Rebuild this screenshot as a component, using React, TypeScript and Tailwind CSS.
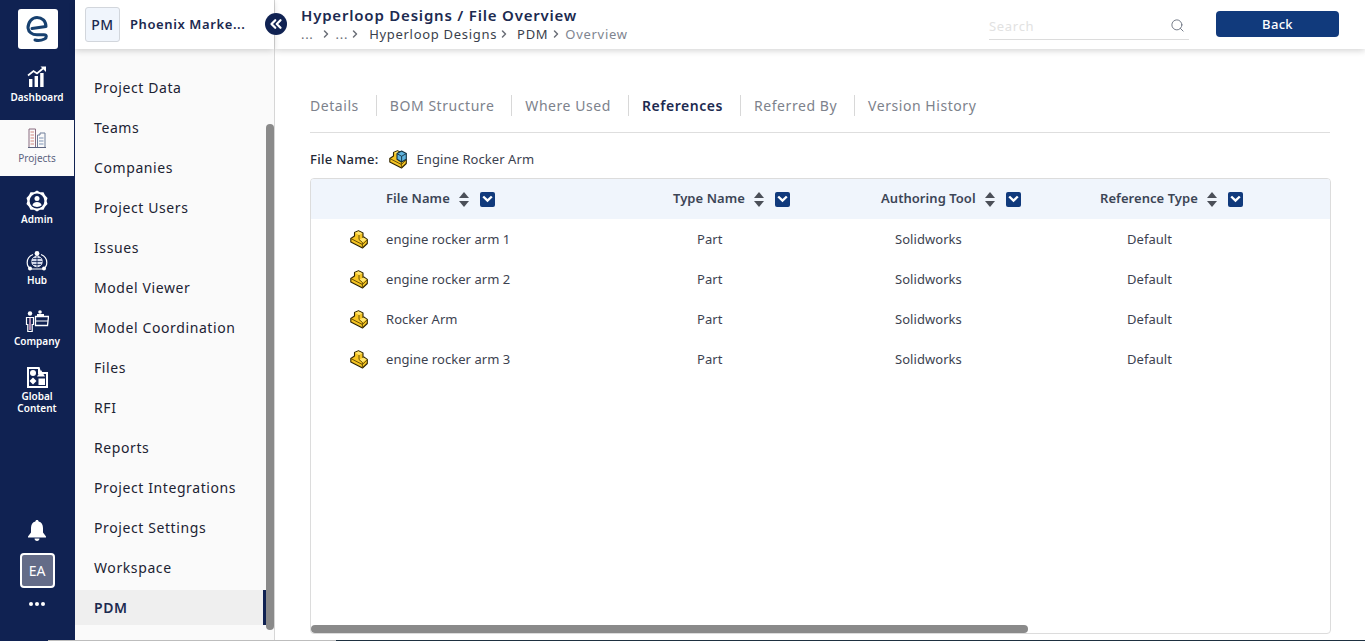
import { ChevronRight, ChevronsLeft, Search } from 'lucide-react';
import type { ReactNode } from 'react';

const projectLinks = [
  'Project Data',
  'Teams',
  'Companies',
  'Project Users',
  'Issues',
  'Model Viewer',
  'Model Coordination',
  'Files',
  'RFI',
  'Reports',
  'Project Integrations',
  'Project Settings',
  'Workspace',
];

const tabs = ['Details', 'BOM Structure', 'Where Used', 'References', 'Referred By', 'Version History'];

const rows = ['engine rocker arm 1', 'engine rocker arm 2', 'Rocker Arm', 'engine rocker arm 3'];

function PartIcon({ assembly = false }: { assembly?: boolean }) {
  return (
    <svg width="18" height="19" viewBox="0 0 18 19" className="shrink-0">
      <path
        d="M.8 8.5 4.5 6V2.5L8.5 .7 13 3V7.5L13.8 7 17.3 9.5V13.5L12.5 18 .8 12Z"
        fill="#f5c423"
        stroke="#2f2502"
        strokeWidth="1.1"
        strokeLinejoin="round"
      />
      <path d="M5 2.8 8.5 1.2 12.5 3.2 9 5Z" fill="#ffe56e" />
      <path d="M9.4 9.5 13.6 7.4 16.8 9.6 12.4 12.3Z" fill="#ffe56e" />
      <path d="M.8 8.5 12.4 14.5V18M12.4 14.5 17.3 9.6M9 5V9.5L12.4 12.4V14.5" fill="none" stroke="#5e4703" strokeWidth=".9" />
      {assembly && (
        <g strokeLinejoin="round">
          <path d="M8 3.6 12.6 1 17.3 3.6V9.2L12.6 12 8 9.2Z" fill="#5fb2dc" stroke="#12303f" strokeWidth="1.1" />
          <path d="M8 3.6 12.6 6.3 17.3 3.6M12.6 6.3V12" fill="none" stroke="#12303f" strokeWidth=".9" />
        </g>
      )}
    </svg>
  );
}

function SortControls() {
  return (
    <div className="flex items-center gap-[11px]">
      <svg width="10" height="15" viewBox="0 0 10 15" fill="#4b4f58">
        <path d="M5 0 10 6H0Z" />
        <path d="M5 15 0 9H10Z" />
      </svg>
      <span className="flex h-[15px] w-[15px] items-center justify-center rounded-[2px] bg-[#113a7c]">
        <svg width="11" height="8" viewBox="0 0 11 8" fill="none" stroke="#fff" strokeWidth="2.4">
          <path d="M1.2 1.5 5.5 5.6 9.8 1.5" />
        </svg>
      </span>
    </div>
  );
}

function RailItem({ label, icon, active }: { label: ReactNode; icon: ReactNode; active?: boolean }) {
  return (
    <div
      className={`flex w-[74px] flex-col items-center text-center text-[10px] leading-[12px] ${
        active ? 'h-[56px] gap-[4px] bg-[#fafafa] pt-[8px] text-[#5c6480]' : 'font-semibold text-white'
      }`}
    >
      {icon}
      <span>{label}</span>
    </div>
  );
}

function Rail() {
  return (
    <aside className="flex w-[75px] shrink-0 flex-col items-start bg-[#102252] pt-[9px]">
      <div className="ml-[18px] flex h-10 w-10 items-center justify-center rounded-[3px] bg-white">
        <svg width="26" height="28" viewBox="0 0 26 28" fill="none" stroke="#17406f" strokeWidth="3" strokeLinecap="round" strokeLinejoin="round">
          <path d="M3 13C3 7 7 2.5 12 2.5 17 2.5 21 6 21 11.5L7 13.5M3 13C3.5 17 7 19.8 12 19.8H19C22 19.8 22 22.8 19.5 24 17 25.2 13 25.8 10 25" />
        </svg>
      </div>

      <div className="mt-[17px] flex flex-col">
        <RailItem
          label="Dashboard"
          icon={
            <svg width="20" height="22" viewBox="0 0 20 22" fill="#fff" className="mb-[3px]">
              <rect x="2" y="13" width="3.4" height="8" />
              <rect x="7.6" y="10" width="3.4" height="11" />
              <rect x="13.2" y="7" width="3.4" height="14" />
              <path d="M1 9.5 6.5 5 10 7.5 16 2.5" fill="none" stroke="#fff" strokeWidth="1.7" />
              <path d="M13.5 0.5H19V6Z" />
            </svg>
          }
        />
        <div className="mt-[17px]">
          <RailItem
            active
            label="Projects"
            icon={
              <svg width="18" height="20" viewBox="0 0 18 20" fill="none" strokeWidth="1">
                <path d="M1 19.5V1H7.5V19.5" stroke="#8a6d80" />
                <path d="M9.5 19.5V7H12V5H17V19.5" stroke="#6f7f9a" />
                <path d="M2.5 4H6M2.5 7H6M2.5 10H6M2.5 13H6M2.5 16H6" stroke="#d28a80" />
                <path d="M11 10H15.5M11 13H15.5M11 16H15.5" stroke="#7d93b5" />
                <path d="M0 19.5H18" stroke="#5c6480" />
              </svg>
            }
          />
        </div>
        <div className="mt-[14px]">
          <RailItem
            label="Admin"
            icon={
              <svg width="22" height="22" viewBox="0 0 22 22" className="mb-[1px]">
                <path
                  d="M11 0.5 14 2.2 17.5 2.2 19 5.3 21.5 8 20.6 11 21.5 14 19 16.7 17.5 19.8 14 19.8 11 21.5 8 19.8 4.5 19.8 3 16.7 0.5 14 1.4 11 0.5 8 3 5.3 4.5 2.2 8 2.2Z"
                  fill="#fff"
                />
                <circle cx="11" cy="11" r="7.4" fill="#102252" />
                <circle cx="11" cy="8.6" r="2.5" fill="#fff" />
                <path d="M6.3 15.3C7 12.8 9 12 11 12S15 12.8 15.7 15.3C13 17.6 9 17.6 6.3 15.3Z" fill="#fff" />
              </svg>
            }
          />
        </div>
        <div className="mt-[25px]">
          <RailItem
            label="Hub"
            icon={
              <svg width="22" height="22" viewBox="0 0 22 22" fill="none" stroke="#fff" className="mb-[2px]">
                <path d="M7 4.5C3.5 6 1.2 9 1.2 12.5 1.2 15.5 3 18 5 19H17C19 18 20.8 15.5 20.8 12.5 20.8 9 18.5 6 15 4.5" strokeWidth="1.2" />
                <circle cx="11" cy="3.5" r="2.4" fill="#fff" stroke="none" />
                <circle cx="11" cy="11.5" r="5.3" fill="#cfd6ea" stroke="#fff" strokeWidth="0.8" />
                <path d="M5.7 11.5H16.3M11 6.2V16.8M7 8.5H15M7 14.5H15" stroke="#102252" strokeWidth="0.8" />
                <circle cx="4" cy="18.5" r="2" fill="#fff" stroke="none" />
                <circle cx="18" cy="18.5" r="2" fill="#fff" stroke="none" />
              </svg>
            }
          />
        </div>
        <div className="mt-[24px]">
          <RailItem
            label="Company"
            icon={
              <svg width="24" height="22" viewBox="0 0 24 22" fill="none" className="mb-[3px]">
                <circle cx="5" cy="3.5" r="2.2" fill="#fff" />
                <path d="M1.5 7.5H8.5V14.5H7.2V21.5H2.8V14.5H1.5Z" stroke="#fff" strokeWidth="1.2" />
                <path d="M5 8V20" stroke="#d9a6c9" strokeWidth="1.6" />
                <circle cx="15" cy="2" r="1.8" fill="#fff" />
                <path d="M10.5 6.5H23.5L22.5 15.5H10.5Z" stroke="#fff" strokeWidth="1.3" />
                <path d="M12 5H19" stroke="#fff" strokeWidth="2" />
                <path d="M10.5 11H23" stroke="#fff" strokeWidth="1" />
              </svg>
            }
          />
        </div>
        <div className="mt-[20px]">
          <RailItem
            label={
              <>
                Global
                <br />
                Content
              </>
            }
            icon={
              <svg width="21" height="21" viewBox="0 0 21 21" className="mb-[2px]">
                <path d="M0 0H12.5L14 5H21V21H0Z" fill="#fff" />
                <rect x="2" y="2" width="9" height="17" fill="#102252" />
                <rect x="11" y="7" width="8" height="12" fill="#102252" />
                <circle cx="6" cy="6" r="3" fill="#fff" />
                <path d="M14 3 18 9.5H10Z" fill="#fff" />
                <path d="M6 10.5 9.5 14 6 17.5 2.5 14Z" fill="#fff" />
                <rect x="11.5" y="11.5" width="6.5" height="6.5" fill="#fff" />
              </svg>
            }
          />
        </div>
      </div>

      <div className="mt-auto flex w-[74px] flex-col items-center pb-[35px]">
        <svg width="18" height="21" viewBox="0 0 18 21" fill="#fff">
          <path d="M9 0C10 0 10.6.7 10.6 1.6 13.6 2.3 15 5 15 8V12.5L18 16.5V17.5H0V16.5L3 12.5V8C3 5 4.4 2.3 7.4 1.6 7.4.7 8 0 9 0Z" />
          <path d="M6.5 18.5H11.5C11.5 20 10.4 21 9 21S6.5 20 6.5 18.5Z" />
        </svg>
        <div className="mt-[12px] flex h-[35px] w-[35px] items-center justify-center rounded-[4px] border-2 border-white bg-[#646c88] text-sm text-white">
          EA
        </div>
        <div className="mt-[14px] flex gap-[2px]">
          <span className="h-1 w-1 rounded-full bg-white" />
          <span className="h-1 w-1 rounded-full bg-white" />
          <span className="h-1 w-1 rounded-full bg-white" />
        </div>
      </div>
    </aside>
  );
}

function ProjectNav() {
  return (
    <aside className="relative flex w-[200px] shrink-0 flex-col border-r border-[#d6d6d6] bg-[#fafafa]">
      <div className="flex h-[49px] items-center gap-[10px] bg-white pl-[10px] shadow-[0_2px_6px_rgba(0,0,0,0.16)]">
        <div className="flex h-[35px] w-[35px] items-center justify-center rounded-[3px] border border-[#d2d6dc] bg-[#f0f5fc] text-sm font-medium tracking-[0.5px] text-[#1c2a50]">
          PM
        </div>
        <span className="text-[13px] font-semibold tracking-[0.6px] text-[#1c2a50]">Phoenix Marke...</span>
      </div>

      <nav className="mt-[19px] flex flex-col">
        {projectLinks.map((link) => (
          <div key={link} className="flex h-10 items-center pl-[19px] text-sm tracking-[0.6px] text-[#1c2333]">
            {link}
          </div>
        ))}
        <div className="mt-[2px] flex h-[35px] w-[191px] items-center border-r-[3px] border-[#102252] bg-[#efefef] pl-[19px] text-sm font-semibold tracking-[0.6px] text-[#1c2a50]">
          PDM
        </div>
      </nav>

      <div className="absolute left-[191px] top-[124px] h-[506px] w-2 rounded-full bg-[#8a8a8a]" />
      <button
        type="button"
        className="absolute left-[190px] top-[13px] z-10 flex h-[22px] w-[22px] items-center justify-center rounded-full bg-[#102252] text-white"
      >
        <ChevronsLeft size={18} strokeWidth={3} />
      </button>
    </aside>
  );
}

function Header() {
  return (
    <header className="flex h-[49px] shrink-0 items-start bg-white pl-[26px] shadow-[0_2px_6px_rgba(0,0,0,0.16)]">
      <div className="pt-[5px]">
        <h1 className="text-[15px] font-semibold leading-[20px] tracking-[0.8px] text-[#1c2a50]">Hyperloop Designs / File Overview</h1>
        <div className="flex items-center text-[13px] leading-[18px] tracking-[0.7px] text-[#3a3f4c]">
          <span className="text-[#6b6f78]">...</span>
          <ChevronRight size={12} strokeWidth={3} className="ml-[6px] text-[#6b6f78]" />
          <span className="ml-[4px] text-[#6b6f78]">...</span>
          <ChevronRight size={12} strokeWidth={3} className="ml-[1px] text-[#6b6f78]" />
          <span className="ml-[8px]">Hyperloop Designs</span>
          <ChevronRight size={12} strokeWidth={3} className="ml-[1px] text-[#6b6f78]" />
          <span className="ml-[7px]">PDM</span>
          <ChevronRight size={12} strokeWidth={3} className="ml-[2px] text-[#6b6f78]" />
          <span className="ml-[3px] text-[#80858f]">Overview</span>
        </div>
      </div>

      <div className="ml-auto mt-[14px] flex h-[26px] w-[200px] items-center justify-between border-b border-[#dcdcdc] pr-[4px]">
        <span className="text-[13px] tracking-[0.7px] text-[#e2e2e2]">Search</span>
        <Search size={15} strokeWidth={1.5} className="mb-[2px] text-[#6b7280]" />
      </div>
      <button
        type="button"
        className="ml-[27px] mr-[26px] mt-[11px] h-[26px] w-[123px] rounded-[4px] bg-[#113a7c] text-[13px] font-medium leading-[24px] tracking-[0.3px] text-white"
      >
        Back
      </button>
    </header>
  );
}

function Tabs() {
  return (
    <div className="mr-px flex h-[54px] items-start border-b border-[#dedede] pt-[16px]">
      {tabs.map((tab, index) => (
        <div key={tab} className="flex items-center">
          {index > 0 && <span className="ml-[17px] mr-[13px] h-[21px] w-px bg-[#d8d8d8]" />}
          <span
            className={`text-sm leading-[21px] tracking-[0.55px] ${
              tab === 'References' ? 'font-semibold text-[#1c2a50]' : 'text-[#7d828c]'
            }`}
          >
            {tab}
          </span>
        </div>
      ))}
    </div>
  );
}

function FilesTable() {
  return (
    <div className="relative mt-[9px] h-[456px] overflow-hidden rounded-[4px] border border-[#dcdcdc] bg-white">
      <div className="flex h-10 items-center bg-[#f0f5fc] text-[13px] font-semibold tracking-[0.05px] text-[#3c4556]">
        <div className="flex w-[362px] items-center gap-[9px] pl-[75px]">
          File Name
          <SortControls />
        </div>
        <div className="flex w-[208px] items-center gap-[9px]">
          Type Name
          <SortControls />
        </div>
        <div className="flex w-[219px] items-center gap-[9px]">
          Authoring Tool
          <SortControls />
        </div>
        <div className="flex items-center gap-[9px]">
          Reference Type
          <SortControls />
        </div>
      </div>
      {rows.map((row) => (
        <div key={row} className="flex h-10 items-center text-[13px] tracking-[0.05px] text-[#3c4250]">
          <div className="flex w-[362px] items-center">
            <span className="ml-[39px] mr-[18px] flex">
              <PartIcon />
            </span>
            <span className="pt-[2px]">{row}</span>
          </div>
          <div className="w-[198px] pl-[24px] pt-[2px]">Part</div>
          <div className="w-[232px] pl-[24px] pt-[2px]">Solidworks</div>
          <div className="pl-[24px] pt-[2px]">Default</div>
        </div>
      ))}
      <div className="absolute bottom-0 left-0 h-2 w-[717px] rounded-full bg-[#8a8a8a]" />
    </div>
  );
}

export default function App() {
  return (
    <div className="relative flex h-[641px] w-[1365px] overflow-hidden bg-white font-['Noto_Sans',sans-serif]">
      <Rail />
      <ProjectNav />
      <div className="flex min-w-0 flex-1 flex-col">
        <Header />
        <main className="pl-[35px] pr-[34px] pt-[30px]">
          <Tabs />
          <div className="mt-[16px] flex h-5 items-center text-[13px]">
            <span className="pt-[2px] font-medium tracking-[0.3px] text-[#232836]">File Name:</span>
            <span className="mx-[10px] flex">
              <PartIcon assembly />
            </span>
            <span className="pt-[2px] tracking-[0.07px] text-[#3c4250]">Engine Rocker Arm</span>
          </div>
          <FilesTable />
        </main>
      </div>
      <div className="absolute bottom-0 left-[48px] right-0 flex h-px">
        <span className="w-[288px] bg-[#bdbdbd]" />
        <span className="flex-1 bg-[#1e3040]" />
      </div>
    </div>
  );
}
